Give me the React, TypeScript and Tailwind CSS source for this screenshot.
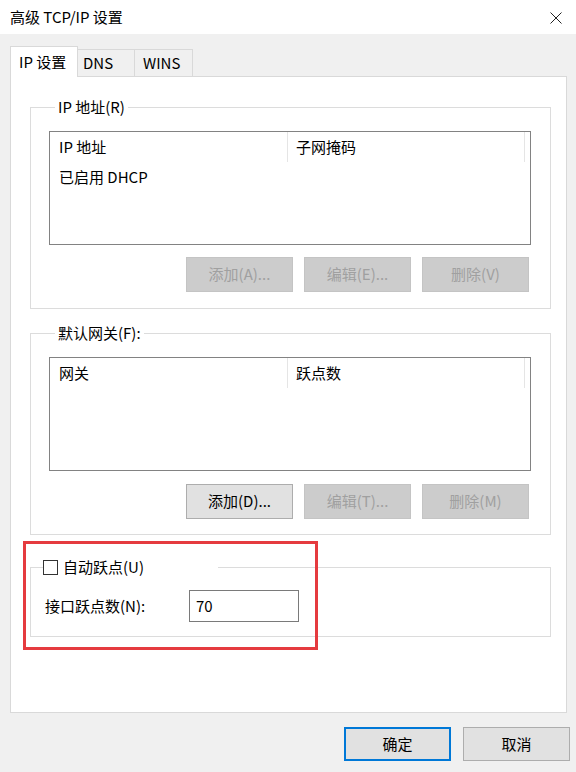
import React from 'react';

const font = { fontFamily: '"Noto Sans CJK SC", "Noto Sans", sans-serif' };

function Btn({ label, disabled }: { label: string; disabled?: boolean }) {
  return (
    <button
      className={
        disabled
          ? 'w-[107px] h-[35px] bg-[#cccccc] border border-[#c4c4c4] text-[#a0a0a0] text-[15px]'
          : 'w-[107px] h-[35px] bg-[#e1e1e1] border border-[#adadad] text-black text-[15px]'
      }
    >
      {label}
    </button>
  );
}

function ListBox({ col1, col2, row }: { col1: string; col2: string; row?: string }) {
  return (
    <div className="w-[482px] h-[114px] border border-[#828282] bg-white">
      <div className="flex h-[30px]">
        <div className="w-[238px] border-r border-[#e5e5e5] pl-[9px] flex items-center">{col1}</div>
        <div className="w-[237px] border-r border-[#e5e5e5] pl-[8px] flex items-center">{col2}</div>
      </div>
      {row && <div className="pl-[9px] h-[30px] flex items-center">{row}</div>}
    </div>
  );
}

export default function App() {
  return (
    <div className="relative w-[576px] h-[772px] bg-[#f0f0f0] text-[15px] text-black overflow-hidden" style={font}>
      {/* title bar */}
      <div className="h-[34px] bg-white flex items-center justify-between pl-[10px] pr-[14px]">
        <span className="text-[15px]">高级 TCP/IP 设置</span>
        <svg width="12" height="12" viewBox="0 0 12 12" className="mt-[1px]">
          <path d="M0.5 0.5 L11.5 11.5 M11.5 0.5 L0.5 11.5" stroke="#222" strokeWidth="1" />
        </svg>
      </div>

      <div className="px-[10px] pt-[12px] pr-[9px]">
        {/* tabs */}
        <div className="flex items-end h-[30px] relative z-10">
          <div className="h-[31px] w-[68px] bg-white border border-b-0 border-[#d9d9d9] pl-[8px] flex items-center mb-[-1px]">
            IP 设置
          </div>
          <div className="h-[27px] w-[57px] bg-[#f0f0f0] border-t border-r border-[#d9d9d9] pl-[5px] flex items-center">
            DNS
          </div>
          <div className="h-[27px] w-[58px] bg-[#f0f0f0] border-t border-r border-[#d9d9d9] pl-[8px] flex items-center">
            WINS
          </div>
        </div>

        {/* panel */}
        <div className="h-[637px] bg-white border border-[#d9d9d9] pl-[19px] pt-[20px]">
          <fieldset className="w-[521px] h-[212px] border border-[#dcdcdc] px-[18px]">
            <legend className="ml-[6px] px-[3px] leading-[20px]">IP 地址(R)</legend>
            <div className="pt-[14px]">
              <ListBox col1="IP 地址" col2="子网掩码" row="已启用 DHCP" />
            </div>
            <div className="w-[480px] flex justify-end gap-[11px] mt-[12px]">
              <Btn label="添加(A)..." disabled />
              <Btn label="编辑(E)..." disabled />
              <Btn label="删除(V)" disabled />
            </div>
          </fieldset>

          <fieldset className="w-[521px] h-[212px] border border-[#dcdcdc] px-[18px] mt-[14px]">
            <legend className="ml-[6px] px-[3px] leading-[20px]">默认网关(F):</legend>
            <div className="pt-[14px]">
              <ListBox col1="网关" col2="跃点数" />
            </div>
            <div className="w-[480px] flex justify-end gap-[11px] mt-[13px]">
              <Btn label="添加(D)..." />
              <Btn label="编辑(T)..." disabled />
              <Btn label="删除(M)" disabled />
            </div>
          </fieldset>

          <fieldset className="w-[521px] h-[80px] border border-[#dcdcdc] pl-[12px] mt-[22px]">
            <legend className="w-[175px] leading-[20px] flex items-center">
              <span className="inline-block w-[15px] h-[15px] border border-[#333333] bg-white mr-[5px]" />
              <span>自动跃点(U)</span>
            </legend>
            <div className="flex items-center mt-[13px] pl-[2px]">
              <span className="w-[144px]">接口跃点数(N):</span>
              <div className="w-[110px] h-[32px] border border-[#7a7a7a] flex items-center pl-[6px]">70</div>
            </div>
          </fieldset>
        </div>

        {/* dialog buttons */}
        <div className="flex justify-end gap-[12px] mt-[14px] mr-[-3px]">
          <button className="w-[107px] h-[34px] bg-[#e1e1e1] border-2 border-[#0078d7]">确定</button>
          <button className="w-[107px] h-[34px] bg-[#e1e1e1] border border-[#adadad]">取消</button>
        </div>
      </div>

      {/* annotation box */}
      <div className="absolute left-[23px] top-[541px] w-[295px] h-[109px] border-[3px] border-[#e53b3f] pointer-events-none" />
    </div>
  );
}
